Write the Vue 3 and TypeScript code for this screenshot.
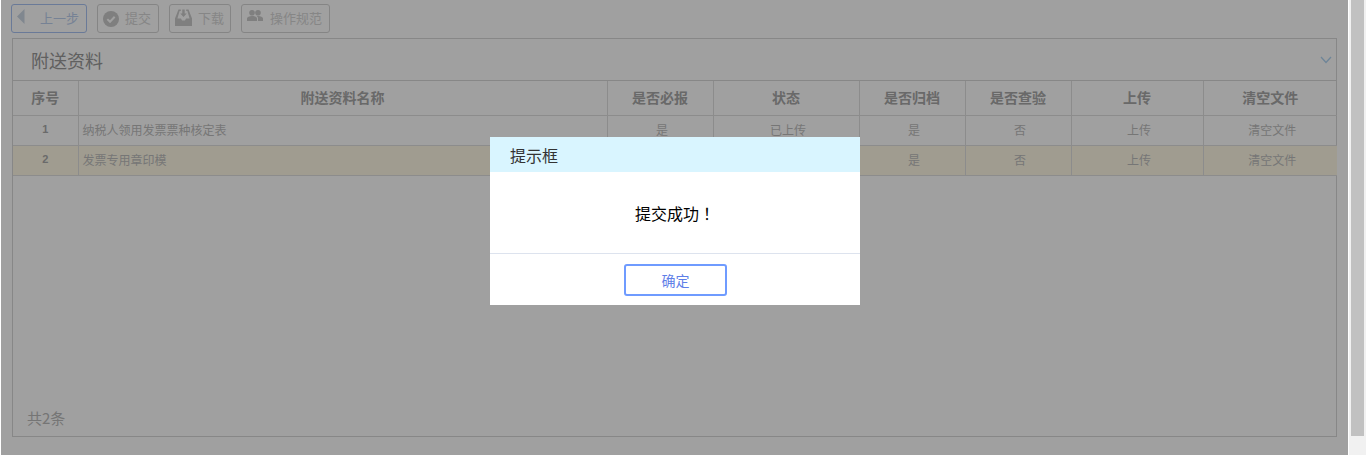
<script setup lang="ts">
interface Row { no: number; name: string; must: string; status: string; archive: string; check: string }
const columns = ['序号', '附送资料名称', '是否必报', '状态', '是否归档', '是否查验', '上传', '清空文件']
const rows: Row[] = [
  { no: 1, name: '纳税人领用发票票种核定表', must: '是', status: '已上传', archive: '是', check: '否' },
  { no: 2, name: '发票专用章印模', must: '是', status: '已上传', archive: '是', check: '否' },
]
</script>

<template>
  <div class="page">
    <main class="main">
      <div class="toolbar">
        <button class="btn btn-back">
          <svg class="ico-back" width="8" height="16" viewBox="0 0 8 16"><path d="M7.500 0v15L0 7.500z" fill="#ccd8e4" /></svg>
          <span>上一步</span>
        </button>
        <button class="btn btn-submit">
          <svg width="16" height="16" viewBox="0 0 16 16"><circle cx="8" cy="8" r="8" fill="#cacaca" /><path d="M4.300 8.100l2.700 2.700 4.700-5" fill="none" stroke="#fff" stroke-width="2" /></svg>
          <span>提交</span>
        </button>
        <button class="btn btn-down">
          <svg class="ico-down" width="17" height="17" viewBox="0 0 17 17"><path d="M3.500 0.500h2.300v1.400H4.600L2.400 9.500H6l1 2h3l1-2h3.600L12.400 1.900h-1.200V0.500h2.300L17 9.500V17H0V9.500z" fill="#cacaca" /><path d="M7.300 0.500h2.400v4h2L8.500 8 5.300 4.500h2z" fill="#cacaca" /></svg>
          <span>下载</span>
        </button>
        <button class="btn btn-rule">
          <svg class="ico-users" width="16" height="11" viewBox="0 0 16 11"><circle cx="5" cy="2.800" r="2.800" fill="#cacaca" /><circle cx="11" cy="2.800" r="2.800" fill="#cacaca" /><path d="M0 11V8.500C0 7 2.300 6 5 6s5 1 5 2.500V11zM11 11V8.500c0-1-.5-1.800-1.400-2.400.4-.1.900-.1 1.400-.1 2.700 0 5 1 5 2.500V11z" fill="#cacaca" /></svg>
          <span>操作规范</span>
        </button>
      </div>

      <section class="panel">
        <header class="panel-head">
          <h2>附送资料</h2>
          <svg class="chev" width="12" height="8" viewBox="0 0 12 8"><path d="M1 1l5 5.500L11 1" fill="none" stroke="#b0d4f2" stroke-width="1.300" /></svg>
        </header>
        <table class="grid">
          <colgroup>
            <col style="width:65px" /><col style="width:529px" /><col style="width:106px" /><col style="width:146px" />
            <col style="width:106px" /><col style="width:106px" /><col style="width:132px" /><col style="width:134px" />
          </colgroup>
          <thead>
            <tr><th v-for="c in columns" :key="c">{{ c }}</th></tr>
          </thead>
          <tbody>
            <tr v-for="r in rows" :key="r.no" :class="{ hl: r.no === 2 }">
              <td class="no">{{ r.no }}</td>
              <td class="name">{{ r.name }}</td>
              <td>{{ r.must }}</td>
              <td>{{ r.status }}</td>
              <td>{{ r.archive }}</td>
              <td>{{ r.check }}</td>
              <td>上传</td>
              <td>清空文件</td>
            </tr>
          </tbody>
        </table>
        <div class="total">共2条</div>
      </section>

      <div class="mask"></div>
      <div class="dialog">
        <div class="dialog-head">提示框</div>
        <div class="dialog-body">提交成功<span class="bang">！</span></div>
        <div class="dialog-foot"><button class="ok">确定</button></div>
      </div>
    </main>
    <aside class="scrollbar"><div class="thumb"></div></aside>
  </div>
</template>

<style>
html, body { margin: 0; overflow: hidden; background: #fff; }
</style>

<style scoped>
.page {
  display: flex;
  width: 1366px;
  height: 455px;
  overflow: hidden;
  font-family: "Noto Sans CJK SC", "Liberation Sans", sans-serif;
}
.main {
  position: relative;
  width: 1349px;
  height: 455px;
  padding: 4px 12px 0 12px;
  box-sizing: border-box;
  background: #fff;
}
.toolbar { display: flex; gap: 10px; height: 29px; margin-left: -1px; margin-bottom: 5px; }
.btn {
  display: flex;
  align-items: center;
  height: 29px;
  padding: 0 0 0 5px;
  box-sizing: border-box;
  border: 1px solid #d5d5d5;
  border-radius: 3px;
  background: #fff;
  color: #d6d6d6;
  font: 13px "Noto Sans CJK SC", sans-serif;
}
.btn span { margin-bottom: 2px; }
.btn-back { width: 76px; border-color: #a9c3f2; color: #bccfee; gap: 15px; }
.btn-submit { width: 62px; gap: 6px; }
.btn-down { width: 62px; gap: 6px; }
.btn-rule { width: 89px; gap: 7px; }
.ico-back { margin-bottom: 3px; }
.ico-down { margin-bottom: 3px; }
.ico-users { margin-bottom: 6px; }
.panel {
  height: 399px;
  box-sizing: border-box;
  border: 1px solid #d8d8d8;
  display: flex;
  flex-direction: column;
  background: #fff;
}
.panel-head {
  height: 42px;
  flex: none;
  display: flex;
  align-items: center;
  justify-content: space-between;
  padding: 0 4px 0 18px;
  border-bottom: 1px solid #d8d8d8;
  box-sizing: border-box;
}
.panel-head h2 { margin: 0; font-size: 18px; font-weight: 400; color: #999; }
.chev { margin-top: 1px; }
.grid { width: 1324px; border-collapse: collapse; table-layout: fixed; flex: none; }
.grid th, .grid td { border-bottom: 1px solid #e0e0e0; border-right: 1px solid #e0e0e0; padding: 0 0 2px; text-align: center; box-sizing: border-box; }
.grid th:last-child, .grid td:last-child { border-right: 0; }
.grid th { height: 34px; font-size: 14px; font-weight: 700; color: #a8a8a8; }
.grid td { height: 30px; padding-left: 4px; font-size: 12px; color: #bdbdbd; }
.grid td.no { padding-left: 0; font-weight: 700; color: #aaa; font-size: 11px; font-family: "Liberation Sans", sans-serif; }
.grid td.name { text-align: left; padding-left: 4px; }
.hl td { background: #fff9e6; }
.total { margin-top: auto; padding: 0 0 8px 14px; font-size: 15px; color: #bbb; }
.mask { position: absolute; inset: 0 1px 0 1px; background: rgba(0, 0, 0, .373); }
.dialog {
  position: absolute;
  left: 490px;
  top: 137px;
  width: 370px;
  height: 168px;
  display: flex;
  flex-direction: column;
  background: #fff;
}
.dialog-head { height: 35px; line-height: 37px; padding-left: 20px; background: #d9f5ff; color: #333; font-size: 16px; }
.dialog-body { flex: 1; display: flex; align-items: center; justify-content: center; box-sizing: border-box; font-size: 16px; color: #000; }
.bang { font-family: "Noto Sans CJK JP", sans-serif; }
.dialog-foot { height: 52px; flex: none; display: flex; justify-content: flex-start; border-top: 1px solid #dde3ee; box-sizing: border-box; padding: 10px 0 0 134px; }
.ok {
  width: 103px;
  height: 32px;
  box-sizing: border-box;
  border: 2px solid #6f9bff;
  border-radius: 3px;
  background: #fff;
  color: #5f7fe8;
  font: 14px "Noto Sans CJK SC", sans-serif;
  padding: 0;
}
.scrollbar { width: 17px; height: 455px; background: #f1f1f1; padding: 0 2px; box-sizing: border-box; }
.thumb { height: 436px; background: #c1c1c1; }
</style>
